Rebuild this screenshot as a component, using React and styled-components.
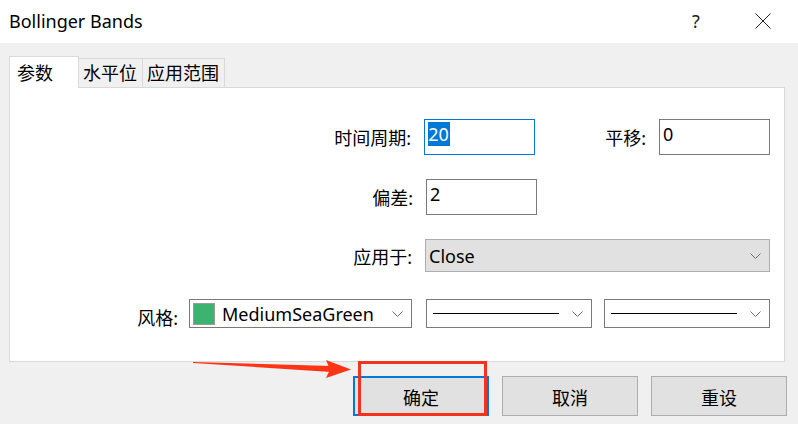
import React from 'react';
import styled, {createGlobalStyle} from 'styled-components';

/**
 * Bollinger Bands properties dialog
 * rows: label + field(s), right aligned inside the tab panel
 */

const FONT = `"Noto Sans", "Noto Sans CJK SC", sans-serif`;

const tabs = [
    {text: '参数', width: 70, active: true},
    {text: '水平位', width: 65},
    {text: '应用范围', width: 83},
];

function Chevron() {
    return (
        <svg width="11" height="6" viewBox="0 0 11 6">
            <polyline points="0.5,0.5 5.5,5.5 10.5,0.5" fill="none" stroke="#6d6d6d" strokeWidth="1" />
        </svg>
    );
}

function LineSelect({width, lineWidth}) {
    return (
        <Styled.Select width={width} height={29} white>
            <Styled.Line style={{width: lineWidth}} />
            <Chevron />
        </Styled.Select>
    );
}

function App() {
    return (
        <>
        <GlobalStyle />
        <Styled.Window>
            <Styled.TitleBar>
                <Styled.Title>Bollinger Bands</Styled.Title>
                <Styled.Help>?</Styled.Help>
                <Styled.Close>
                    <svg width="16" height="16" viewBox="0 0 16 16">
                        <path d="M0.5 0.5 L15.5 15.5 M15.5 0.5 L0.5 15.5" stroke="#222" strokeWidth="1" />
                    </svg>
                </Styled.Close>
            </Styled.TitleBar>

            <Styled.Body>
                <Styled.Tabs>
                    {tabs.map((t, index) => (
                        <Styled.Tab key={index} width={t.width} active={t.active}>{t.text}</Styled.Tab>
                    ))}
                </Styled.Tabs>

                <Styled.Panel>
                    <Styled.Row top={31} height={36}>
                        <Styled.Label>时间周期:</Styled.Label>
                        <Styled.Input focused><Styled.Selected>20</Styled.Selected></Styled.Input>
                        <Styled.Label gap={70}>平移:</Styled.Label>
                        <Styled.Input>0</Styled.Input>
                    </Styled.Row>
                    <Styled.Row top={24} height={36} short>
                        <Styled.Label>偏差:</Styled.Label>
                        <Styled.Input>2</Styled.Input>
                    </Styled.Row>
                    <Styled.Row top={24} height={33}>
                        <Styled.Label>应用于:</Styled.Label>
                        <Styled.Select width={345} height={33}>
                            <span>Close</span>
                            <Chevron />
                        </Styled.Select>
                    </Styled.Row>
                    <Styled.Row top={27} height={29}>
                        <Styled.Label style={{marginRight: 11}} low>风格:</Styled.Label>
                        <Styled.Select width={223} height={29} white>
                            <Styled.Swatch />
                            <Styled.SelectText>MediumSeaGreen</Styled.SelectText>
                            <Chevron />
                        </Styled.Select>
                        <Styled.Spacer w={14} />
                        <LineSelect width={166} lineWidth={126} />
                        <Styled.Spacer w={12} />
                        <LineSelect width={166} lineWidth={126} />
                    </Styled.Row>
                </Styled.Panel>

                <Styled.Buttons>
                    <Styled.Button primary>确定</Styled.Button>
                    <Styled.Button>取消</Styled.Button>
                    <Styled.Button>重设</Styled.Button>
                </Styled.Buttons>
            </Styled.Body>

            {/* annotation overlay */}
            <Styled.Arrow width="170" height="30" viewBox="0 0 170 30">
                <polygon points="0,2 138,6 138,12 0,3" fill="#ff3414" />
                <polygon points="133,0 158,9.5 133,18 137,9.5" fill="#ff3414" />
            </Styled.Arrow>
            <Styled.Mark />
        </Styled.Window>
        </>
    );
}

const GlobalStyle = createGlobalStyle`
    html, body {
        margin: 0;
        padding: 0;
        background: #f0f0f0;
    }
    * { box-sizing: border-box; }
`;

const Styled = {
    Window: styled.div`
        position: relative;
        width: 798px;
        height: 424px;
        background: #f0f0f0;
        font-family: ${FONT};
        color: #000;
        overflow: hidden;
    `,
    TitleBar: styled.div`
        display: flex;
        align-items: center;
        height: 43px;
        background: #fff;
        padding-left: 9px;
    `,
    Title: styled.div`
        flex: 1;
        font-size: 18px;
        margin-top: -2px;
    `,
    Help: styled.div`
        width: 16px;
        font-size: 18px;
        color: #222;
        margin-right: 47px;
        margin-top: -1px;
    `,
    Close: styled.div`
        display: flex;
        width: 16px;
        margin-right: 27px;
        margin-top: -1px;
    `,
    Body: styled.div`
        padding: 13px 13px 0 9px;
    `,
    Tabs: styled.div`
        display: flex;
        align-items: flex-end;
        height: 32px;
        position: relative;
        z-index: 1;
    `,
    Tab: styled.div`
        width: ${props => props.width}px;
        height: ${props => props.active ? 32 : 30}px;
        margin-left: ${props => props.active ? 0 : -1}px;
        background: ${props => props.active ? '#fff' : '#f0f0f0'};
        border: 1px solid #d9d9d9;
        border-bottom: ${props => props.active ? 'none' : '1px solid #d9d9d9'};
        font-size: 18px;
        line-height: 26px;
        padding-top: ${props => props.active ? 3 : 1}px;
        padding-left: ${props => props.active ? 7 : 4}px;
        white-space: nowrap;
    `,
    Panel: styled.div`
        margin-top: -1px;
        height: 275px;
        background: #fff;
        border: 1px solid #d9d9d9;
        padding-right: 14px;
        display: flex;
        flex-direction: column;
    `,
    Row: styled.div`
        display: flex;
        align-items: center;
        justify-content: flex-end;
        height: ${props => props.height}px;
        margin-top: ${props => props.top}px;
        padding-right: ${props => props.short ? 233 : 0}px;
    `,
    Label: styled.div`
        font-size: 18px;
        line-height: 24px;
        margin-left: ${props => props.gap || 0}px;
        margin-right: 13px;
        margin-top: ${props => props.low ? 8 : 2}px;
        white-space: nowrap;
    `,
    Input: styled.div`
        width: 111px;
        height: 36px;
        border: 1px solid ${props => props.focused ? '#0078d7' : '#7a7a7a'};
        background: #fff;
        font-size: 18px;
        line-height: 24px;
        padding: 2px 3px;
    `,
    Selected: styled.span`
        background: #0078d7;
        color: #fff;
        display: inline-block;
        padding-right: 1px;
    `,
    Select: styled.div`
        display: flex;
        align-items: center;
        flex-shrink: 0;
        width: ${props => props.width}px;
        height: ${props => props.height}px;
        background: ${props => props.white ? '#fff' : '#e1e1e1'};
        border: 1px solid ${props => props.white ? '#7a7a7a' : '#adadad'};
        padding: 0 8px 0 3px;
        font-size: 18px;
        & > span { flex: 1; }
        & svg { margin-left: auto; }
    `,
    SelectText: styled.span`
        padding-left: 7px;
        white-space: nowrap;
    `,
    Swatch: styled.div`
        width: 22px;
        height: 22px;
        background: #3cb371;
        border: 1px solid #9a9a9a;
    `,
    Line: styled.div`
        height: 1px;
        background: #000;
        margin-left: 3px;
    `,
    Spacer: styled.div`
        width: ${props => props.w}px;
    `,
    Buttons: styled.div`
        display: flex;
        justify-content: flex-end;
        gap: 13px;
        padding-top: 14px;
        margin-right: -2px;
    `,
    Button: styled.div`
        width: 136px;
        height: 40px;
        display: flex;
        align-items: center;
        justify-content: center;
        background: #e1e1e1;
        border: ${props => props.primary ? '2px solid #0078d7' : '1px solid #adadad'};
        font-size: 18px;
        padding-top: 2px;
    `,
    Arrow: styled.svg`
        position: absolute;
        left: 193px;
        top: 360px;
    `,
    Mark: styled.div`
        position: absolute;
        left: 358px;
        top: 361px;
        width: 129px;
        height: 55px;
        border: 3px solid #f5331d;
    `,
};

export default App;
